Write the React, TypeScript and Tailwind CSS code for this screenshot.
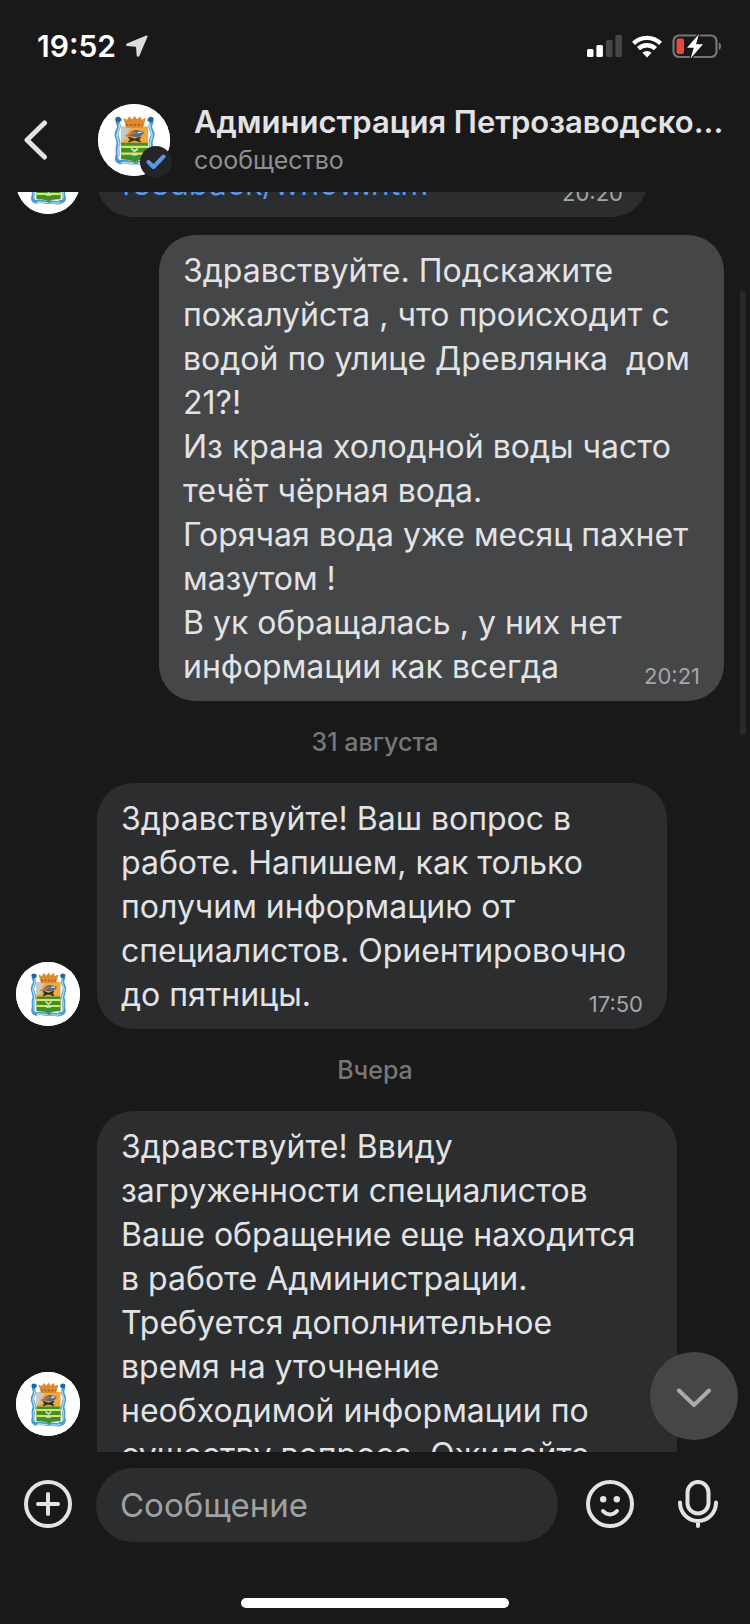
import React from "react";

const messages = [
  {
    id: 1,
    own: true,
    time: "20:21",
    text: "Здравствуйте. Подскажите\nпожалуйста , что происходит с\nводой по улице Древлянка  дом\n21?!\nИз крана холодной воды часто\nтечёт чёрная вода.\nГорячая вода уже месяц пахнет\nмазутом !\nВ ук обращалась , у них нет",
    lastLine: "информации как всегда",
  },
  {
    id: 2,
    own: false,
    time: "17:50",
    text: "Здравствуйте! Ваш вопрос в\nработе. Напишем, как только\nполучим информацию от\nспециалистов. Ориентировочно",
    lastLine: "до пятницы.",
  },
];

const pendingText =
  "Здравствуйте! Ввиду\nзагруженности специалистов\nВаше обращение еще находится\nв работе Администрации.\nТребуется дополнительное\nвремя на уточнение\nнеобходимой информации по\nсуществу вопроса. Ожидайте";

function Crest() {
  return (
    <svg viewBox="0 0 64 64" className="block h-full w-full" aria-hidden="true">
      <rect width="64" height="64" fill="#fff" />
      <g fill="none" stroke="#4a9bcf" strokeWidth="3.4" strokeLinecap="round" strokeLinejoin="round">
        <path d="M19.500 14c-3 0-2 3-1 5 1 3-3 5-2 9s3 6 1 10c-1 4 1 5-.5 9-1 3 1 5 4 4.500" />
        <path d="M45.500 14c3 0 2 3 1 5-1 3 3 5 2 9s-3 6-1 10c1 4-1 5 .5 9 1 3-1 5-4 4.500" />
        <path d="M20 52c4-2.500 8 1 12.500 0s8.500 2.500 12.500 0" />
      </g>
      <g fill="none" stroke="#b9dcf0" strokeWidth="1.3" strokeLinecap="round">
        <path d="M19 18c1 4-3 7-2 11s3 6 1 10c-1 3 1 6 0 9" />
        <path d="M46 18c-1 4 3 7 2 11s-3 6-1 10c1 3-1 6 0 9" />
        <path d="M21 52.500c4-2 7 1 10 0m5 0c3 1 5 1 8 0" />
      </g>
      <circle cx="17.800" cy="13.800" r="2.400" fill="#2a6494" />
      <circle cx="47" cy="13.800" r="2.400" fill="#2a6494" />
      <path d="M20.500 20h24v29c-4 .5-9 0-12 3-3-3-8-2.500-12-3z" fill="#f0a93c" />
      <path d="M20.500 20h9l-3 5-1 6-5 2z" fill="#c3cbc8" />
      <path d="M20.500 34.500h24V49c-4 .5-9 0-12 3-3-3-8-2.500-12-3z" fill="#3d8f2f" />
      <path d="M20.500 38h24M20.500 44h24" stroke="#dde35a" strokeWidth="2" />
      <path d="M29.500 39.500l3 2.500 3-2.500m-5.500 5.500h5" stroke="#d5e5bd" strokeWidth="1.600" fill="none" />
      <path d="M25 21l-2.500-8.500 3.500 1.500 1.500-3 3 2.500 2-3 2 3 3-2.500 1.500 3 3.500-1.500L40 21z" fill="#dc8a30" />
      <path d="M25 18.500h15" stroke="#b45a24" strokeWidth="1.500" strokeDasharray="2 1.500" />
      <path d="M25 28c3-1 4-4 8-5 4 0 6 1 8 2-2 4-6 5-9 4z" fill="#586a78" />
      <path d="M24.500 28.500c3 0 5-3 9-3" stroke="#e06a3a" strokeWidth="1.600" fill="none" />
      <path d="M35 25.500l4-.5" stroke="#bcd2e0" strokeWidth="1.300" />
      <path d="M27 29.500l11 4m0-4l-11 4M28 31.500h9" stroke="#37301d" strokeWidth="1.400" />
    </svg>
  );
}

function Avatar({ className }: { className: string }) {
  return (
    <div className={`shrink-0 overflow-hidden rounded-full bg-white ${className}`}>
      <Crest />
    </div>
  );
}

function DateLabel({ children }: { children: React.ReactNode }) {
  return <div className="flex h-[82px] items-center justify-center pt-[2px] text-[25px] font-medium text-[#767778]">{children}</div>;
}

function Time({ children }: { children: React.ReactNode }) {
  return <time className="text-[22px] leading-[26px] text-[#a5a6a8]">{children}</time>;
}

function Message({ message, width }: { message: (typeof messages)[number]; width: string }) {
  return (
    <article className={`flex items-end ${message.own ? "justify-end pr-[26px]" : "gap-[17px] pl-4"}`}>
      {!message.own && <Avatar className="mb-[3px] h-16 w-16" />}
      <div className={`rounded-[36px] px-6 pt-[14px] pb-3 text-[32px] leading-[44px] ${width} ${message.own ? "bg-[#454647]" : "bg-[#2c2d2e]"}`}>
        <p className="whitespace-pre">{message.text}</p>
        <div className="flex items-end justify-between">
          <p>{message.lastLine}</p>
          <Time>{message.time}</Time>
        </div>
      </div>
    </article>
  );
}

export default function App() {
  return (
    <div className="flex h-screen flex-col overflow-hidden bg-[#19191a] font-['Inter','Liberation_Sans',sans-serif] text-[#e1e3e6]">
      <div className="flex h-[92px] shrink-0 items-center justify-between pr-[28px] pl-[37px]">
        <div className="flex items-center gap-[10px] text-[30px] font-semibold text-white">
          <span>19:52</span>
          <svg width="22" height="22" viewBox="0 0 22 22" aria-hidden="true">
            <path d="M20.300.5 1 8.400c-1.300.600-1.200 2.500.3 2.700l8 .6c.5 0 .8.3.8.8l.6 8c.2 1.500 2.100 1.600 2.700.3L21.500 1.700c.3-.8-.4-1.500-1.200-1.200z" fill="#dcdcdc" />
          </svg>
        </div>
        <div className="flex items-center gap-[10px]">
          <svg width="35" height="22" viewBox="0 0 35 22" aria-hidden="true">
            <rect x="0" y="14" width="6.500" height="8" rx="1.500" fill="#fff" />
            <rect x="9.400" y="10" width="6.500" height="12" rx="1.500" fill="#fff" />
            <rect x="19" y="5" width="6.500" height="17" rx="1.500" fill="#474748" />
            <rect x="28.400" y="0" width="6.500" height="22" rx="1.500" fill="#474748" />
          </svg>
          <svg width="30" height="23" viewBox="0 0 30 23" fill="none" stroke="#fff" strokeWidth="4.400" aria-hidden="true">
            <path d="M1.500 8.300a19.500 19.500 0 0 1 27 0" />
            <path d="M6.500 13.600a12.300 12.300 0 0 1 17 0" />
            <path d="M15 22.500l-4.600-4.700a6.500 6.500 0 0 1 9.200 0z" fill="#fff" stroke="none" />
          </svg>
          <svg width="50" height="26" viewBox="0 0 50 26" aria-hidden="true">
            <rect x="1.500" y="2.500" width="43" height="21.500" rx="5.500" fill="none" stroke="#767677" strokeWidth="2.200" />
            <path d="M46.800 9.500c3 1 3 6.500 0 7.500z" fill="#767677" />
            <rect x="4.500" y="5.500" width="7.500" height="15.500" rx="2" fill="#e5493f" />
            <path d="M27 1 15 14.800h6.800L18.500 25.500 31 11.300h-7z" fill="#fff" stroke="#19191a" strokeWidth="2.500" paintOrder="stroke" />
          </svg>
        </div>
      </div>

      <header className="flex h-[100px] shrink-0 items-center pr-5 pl-6">
        <button aria-label="Назад" className="w-[74px] shrink-0 pb-1">
          <svg width="24" height="40" viewBox="0 0 24 40" fill="none" stroke="#e1e3e6" strokeWidth="5" strokeLinecap="round" strokeLinejoin="round" aria-hidden="true">
            <path d="M20.500 3 3 20l17.500 17" />
          </svg>
        </button>
        <div className="relative mb-1 shrink-0">
          <Avatar className="h-18 w-18" />
          <span className="absolute -right-[2px] -bottom-[2px] flex h-8 w-8 items-center justify-center rounded-full bg-[#232427]">
            <svg width="20" height="16" viewBox="0 0 20 16" fill="none" stroke="#5b98e6" strokeWidth="4" strokeLinecap="round" strokeLinejoin="round" aria-hidden="true">
              <path d="m2.500 8 5 5L17.500 2.500" />
            </svg>
          </span>
        </div>
        <div className="mb-1 ml-6 min-w-0">
          <h1 className="truncate text-[31px] leading-[40px] font-semibold">Администрация Петрозаводско...</h1>
          <p className="text-[25px] leading-[36px] text-[#8f9092]">сообщество</p>
        </div>
      </header>

      <main className="relative min-h-0 flex-1 overflow-hidden">
        <div className="-mt-[45px]">
          <article className="mb-[18px] flex items-end gap-[17px] pl-4">
            <Avatar className="mb-[3px] h-16 w-16" />
            <div className="flex w-[550px] items-end justify-between rounded-[36px] bg-[#2c2d2e] px-6 pt-[15px] pb-[11px]">
              <a href="#feedback" className="text-[32px] leading-[44px] text-[#5b98e6]">feedback/whow.htm</a>
              <Time>20:20</Time>
            </div>
          </article>
          <Message message={messages[0]} width="w-[565px]" />
          <DateLabel>31 августа</DateLabel>
          <Message message={messages[1]} width="w-[570px]" />
          <DateLabel>Вчера</DateLabel>
          <article className="pl-[97px]">
            <div className="w-[580px] rounded-t-[36px] bg-[#2c2d2e] px-6 pt-[14px]">
              <p className="whitespace-pre text-[32px] leading-[44px]">{pendingText}</p>
            </div>
          </article>
        </div>
        <Avatar className="absolute bottom-4 left-4 h-16 w-16" />
        <div className="absolute top-[99px] right-1 h-[444px] w-[6px] rounded-full bg-[#29292a]" />
        <button aria-label="Вниз" className="absolute right-3 bottom-3 flex h-22 w-22 items-center justify-center rounded-full bg-[#454647] pt-1">
          <svg width="36" height="20" viewBox="0 0 36 20" fill="none" stroke="#aaabad" strokeWidth="4" strokeLinecap="round" strokeLinejoin="round" aria-hidden="true">
            <path d="m3 2.500 15 14.500L33 2.500" />
          </svg>
        </button>
      </main>

      <footer className="flex h-[172px] shrink-0 flex-col justify-between pt-4 pb-4">
        <form className="flex items-center pr-7 pl-6" onSubmit={(event) => event.preventDefault()}>
          <button type="button" aria-label="Прикрепить" className="shrink-0 pb-[2px]">
            <svg width="48" height="48" viewBox="0 0 48 48" fill="none" stroke="#e1e3e6" strokeWidth="4" strokeLinecap="round" aria-hidden="true">
              <circle cx="24" cy="24" r="22" />
              <path d="M24 14v20M14 24h20" />
            </svg>
          </button>
          <input aria-label="Сообщение" placeholder="Сообщение" className="ml-6 h-[74px] min-w-0 flex-1 rounded-full bg-[#2c2d2e] px-6 text-[33px] outline-none placeholder:text-[#a0a1a3]" />
          <button type="button" aria-label="Смайлы" className="ml-7 shrink-0 pb-[2px]">
            <svg width="48" height="48" viewBox="0 0 48 48" fill="none" stroke="#e1e3e6" strokeWidth="4" strokeLinecap="round" aria-hidden="true">
              <circle cx="24" cy="24" r="22" />
              <circle cx="17.200" cy="19.200" r="3.200" fill="#e1e3e6" stroke="none" />
              <circle cx="30.800" cy="19.200" r="3.200" fill="#e1e3e6" stroke="none" />
              <path d="M17 31c4 4.500 10 4.500 14 0" />
            </svg>
          </button>
          <button type="button" aria-label="Голосовое сообщение" className="ml-[40px] shrink-0 pb-[2px]">
            <svg width="48" height="48" viewBox="0 0 48 48" fill="none" stroke="#e1e3e6" strokeWidth="4" strokeLinecap="round" aria-hidden="true">
              <rect x="13.500" y="2" width="21" height="31.500" rx="10.500" />
              <path d="M6 22.500C6 33 14 41 24 41S42 33 42 22.500M24 41v5" />
            </svg>
          </button>
        </form>
        <div className="mx-auto h-[10px] w-[268px] rounded-full bg-white" />
      </footer>
    </div>
  );
}
